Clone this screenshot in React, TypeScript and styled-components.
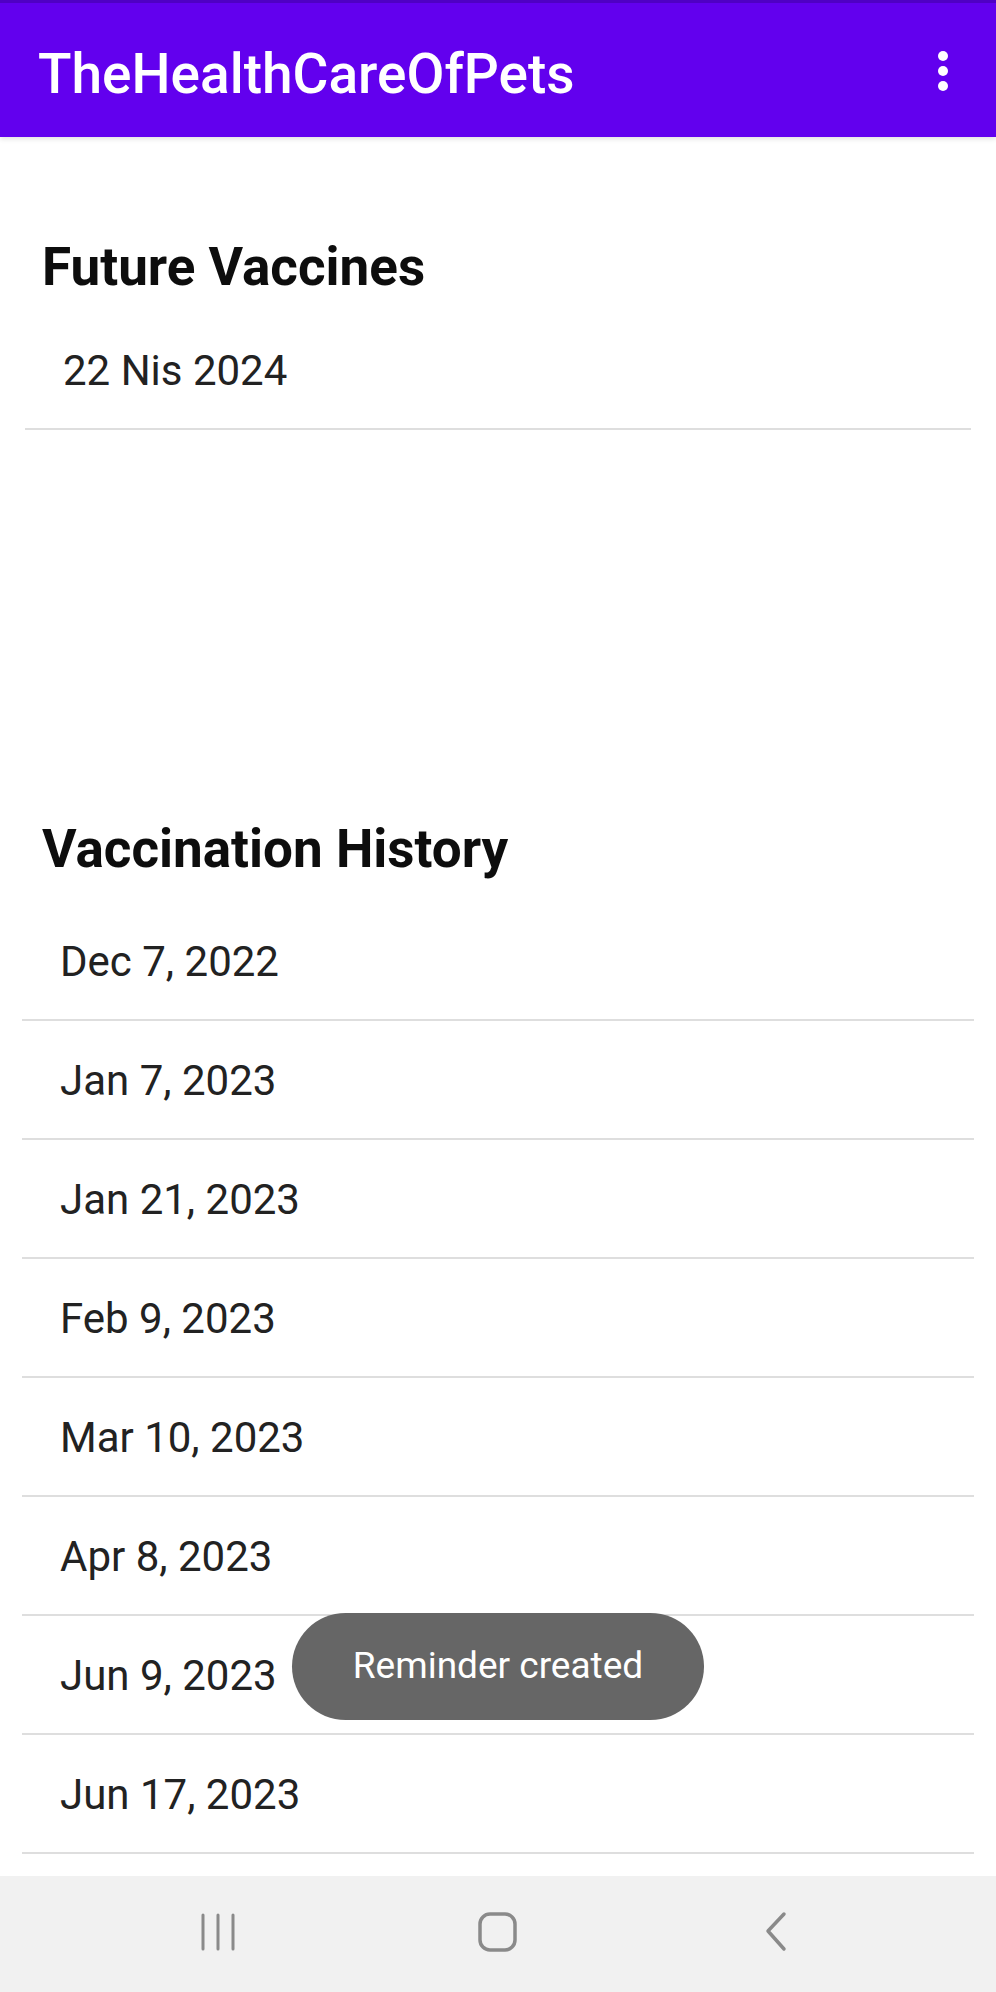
import React from "react";
import styled, { createGlobalStyle } from "styled-components";

const GlobalStyle = createGlobalStyle`
  html, body {
    margin: 0;
    padding: 0;
    background: #ffffff;
  }
  body {
    font-family: Roboto, "Noto Sans", "Liberation Sans", sans-serif;
  }
  * { box-sizing: border-box; }
`;

const Screen = styled.div`
  position: relative;
  width: 996px;
  height: 1992px;
  display: flex;
  flex-direction: column;
  overflow: hidden;
  background: #ffffff;
`;

const AppBar = styled.header`
  position: relative;
  z-index: 2;
  flex: 0 0 137px;
  display: flex;
  align-items: center;
  justify-content: space-between;
  padding: 8px 0 0 38px;
  background: #6200ee;
  border-top: 3px solid #4f00c4;
  box-shadow: 0 2px 5px rgba(0, 0, 0, 0.12);
`;

const Title = styled.h1`
  margin: 0;
  font-size: 55px;
  font-weight: 500;
  color: #ffffff;
  letter-spacing: 0;
`;

const MenuButton = styled.div`
  display: flex;
  flex-direction: column;
  align-items: center;
  gap: 5px;
  width: 30px;
  margin: 0 38px 6px 0;
`;

const Dot = styled.span`
  width: 10px;
  height: 10px;
  border-radius: 50%;
  background: #ffffff;
`;

const Main = styled.main`
  flex: 1 1 auto;
  display: flex;
  flex-direction: column;
  overflow: hidden;
`;

const Section = styled.section<{ $height?: number; $top: number }>`
  flex: 0 0 auto;
  ${(p) => (p.$height ? `height: ${p.$height}px;` : "")}
  padding-top: ${(p) => p.$top}px;
  display: flex;
  flex-direction: column;
`;

const Heading = styled.h2`
  margin: 0;
  padding-left: 42px;
  font-size: 53px;
  font-weight: 700;
  color: #0d0d0d;
`;

const List = styled.ul<{ $inset: number; $gap: number }>`
  list-style: none;
  margin: ${(p) => p.$gap}px ${(p) => p.$inset}px 0;
  padding: 0;
`;

const Row = styled.li<{ $padLeft: number; $padTop: number }>`
  padding: ${(p) => p.$padTop}px 0 33px ${(p) => p.$padLeft}px;
  font-size: 42px;
  color: #222222;
  border-bottom: 2px solid #dedede;
`;

const NavBar = styled.nav`
  position: relative;
  z-index: 2;
  flex: 0 0 116px;
  display: grid;
  grid-template-columns: repeat(3, 1fr);
  align-items: center;
  justify-items: center;
  background: #f1f1f1;
  padding: 0 60px 4px;
`;

const NavIcon = styled.svg<{ $shift: number }>`
  display: block;
  transform: translateX(${(p) => p.$shift}px);
`;

const Toast = styled.div`
  position: absolute;
  left: 292px;
  top: 1613px;
  width: 412px;
  height: 107px;
  border-radius: 54px;
  background: #666666;
  display: flex;
  align-items: center;
  justify-content: center;
  padding-bottom: 2px;
  color: #ffffff;
  font-size: 37px;
  z-index: 3;
`;

const history = [
  "Dec 7, 2022",
  "Jan 7, 2023",
  "Jan 21, 2023",
  "Feb 9, 2023",
  "Mar 10, 2023",
  "Apr 8, 2023",
  "Jun 9, 2023",
  "Jun 17, 2023",
];

export default function App() {
  return (
    <>
      <GlobalStyle />
      <Screen>
        <AppBar>
          <Title>TheHealthCareOfPets</Title>
          <MenuButton aria-label="More options">
            <Dot />
            <Dot />
            <Dot />
          </MenuButton>
        </AppBar>
        <Main>
          <Section $height={681} $top={99}>
            <Heading>Future Vaccines</Heading>
            <List $inset={25} $gap={13}>
              <Row $padLeft={38} $padTop={35}>22 Nis 2024</Row>
            </List>
          </Section>
          <Section $top={0}>
            <Heading>Vaccination History</Heading>
            <List $inset={22} $gap={22}>
              {history.map((d) => (
                <Row key={d} $padLeft={38} $padTop={35}>
                  {d}
                </Row>
              ))}
            </List>
          </Section>
        </Main>
        <NavBar>
          <NavIcon $shift={12} width="40" height="40" viewBox="0 0 40 40" aria-label="Recent apps">
            <g stroke="#8a8a8a" strokeWidth="3" strokeLinecap="round">
              <line x1="5" y1="3" x2="5" y2="37" />
              <line x1="20" y1="3" x2="20" y2="37" />
              <line x1="35" y1="3" x2="35" y2="37" />
            </g>
          </NavIcon>
          <NavIcon $shift={0} width="42" height="42" viewBox="0 0 42 42" aria-label="Home">
            <rect x="3" y="3" width="35" height="36" rx="10" fill="none" stroke="#8a8a8a" strokeWidth="3.5" />
          </NavIcon>
          <NavIcon $shift={-13} width="30" height="42" viewBox="0 0 30 42" aria-label="Back">
            <polyline points="22,3 6,20 22,38" fill="none" stroke="#8a8a8a" strokeWidth="3.5" strokeLinecap="round" strokeLinejoin="round" />
          </NavIcon>
        </NavBar>
        <Toast>Reminder created</Toast>
      </Screen>
    </>
  );
}
